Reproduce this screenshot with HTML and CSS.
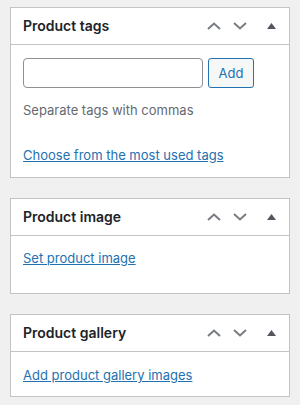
FILE: index.html
```html
<!DOCTYPE html>
<html lang="en">
<head>
    <meta charset="UTF-8">
    <meta name="viewport" content="width=device-width, initial-scale=1.0">
    <title>Product boxes</title>
    <link rel="stylesheet" href="styles.css">
</head>
<body>
    <div class="sidebar">
        <section class="postbox">
            <header class="postbox-header">
                <h2>Product tags</h2>
                <div class="handle-actions">
                    <button class="handle up" aria-label="Move up">
                        <svg width="14" height="8" viewBox="0 0 14 8"><path d="M1 7 L7 1.5 L13 7" fill="none" stroke="#787c82" stroke-width="2"/></svg>
                    </button>
                    <button class="handle down" aria-label="Move down">
                        <svg width="14" height="8" viewBox="0 0 14 8"><path d="M1 1 L7 6.5 L13 1" fill="none" stroke="#787c82" stroke-width="2"/></svg>
                    </button>
                    <button class="handle toggle" aria-label="Toggle panel">
                        <svg width="9" height="6" viewBox="0 0 9 6"><path d="M0 6 L4.5 0 L9 6 Z" fill="#50575e"/></svg>
                    </button>
                </div>
            </header>
            <div class="inside tags">
                <div class="tag-add">
                    <input type="text" class="tag-input">
                    <button class="button">Add</button>
                </div>
                <p class="howto">Separate tags with commas</p>
                <p class="tag-cloud-link"><a href="#">Choose from the most used tags</a></p>
            </div>
        </section>

        <section class="postbox">
            <header class="postbox-header">
                <h2>Product image</h2>
                <div class="handle-actions">
                    <button class="handle up" aria-label="Move up">
                        <svg width="14" height="8" viewBox="0 0 14 8"><path d="M1 7 L7 1.5 L13 7" fill="none" stroke="#787c82" stroke-width="2"/></svg>
                    </button>
                    <button class="handle down" aria-label="Move down">
                        <svg width="14" height="8" viewBox="0 0 14 8"><path d="M1 1 L7 6.5 L13 1" fill="none" stroke="#787c82" stroke-width="2"/></svg>
                    </button>
                    <button class="handle toggle" aria-label="Toggle panel">
                        <svg width="9" height="6" viewBox="0 0 9 6"><path d="M0 6 L4.5 0 L9 6 Z" fill="#50575e"/></svg>
                    </button>
                </div>
            </header>
            <div class="inside short">
                <p><a href="#">Set product image</a></p>
            </div>
        </section>

        <section class="postbox">
            <header class="postbox-header">
                <h2>Product gallery</h2>
                <div class="handle-actions">
                    <button class="handle up" aria-label="Move up">
                        <svg width="14" height="8" viewBox="0 0 14 8"><path d="M1 7 L7 1.5 L13 7" fill="none" stroke="#787c82" stroke-width="2"/></svg>
                    </button>
                    <button class="handle down" aria-label="Move down">
                        <svg width="14" height="8" viewBox="0 0 14 8"><path d="M1 1 L7 6.5 L13 1" fill="none" stroke="#787c82" stroke-width="2"/></svg>
                    </button>
                    <button class="handle toggle" aria-label="Toggle panel">
                        <svg width="9" height="6" viewBox="0 0 9 6"><path d="M0 6 L4.5 0 L9 6 Z" fill="#50575e"/></svg>
                    </button>
                </div>
            </header>
            <div class="inside gallery">
                <p><a href="#">Add product gallery images</a></p>
            </div>
        </section>
    </div>
</body>
</html>
```

FILE: styles.css
```css
/* General */
body {
    font-family: 'Inter', 'Liberation Sans', Arial, sans-serif;
    font-size: 13px;
    line-height: 18px;
    color: #3c434a;
    margin: 0;
    padding: 0;
    background-color: #f0f0f1;
}

.sidebar {
    padding: 7px 10px 0 10px;
    display: flex;
    flex-direction: column;
    gap: 20px;
}

/* Boxes */
.postbox {
    background-color: #fff;
    border: 1px solid #c3c4c7;
}

.postbox-header {
    display: flex;
    align-items: center;
    justify-content: space-between;
    height: 36px;
    border-bottom: 1px solid #c3c4c7;
}

.postbox-header h2 {
    margin: 0;
    padding: 0 12px;
    font-size: 14px;
    font-weight: 600;
    color: #1d2327;
}

.handle-actions {
    display: flex;
    align-items: center;
    height: 100%;
}

.handle {
    background: none;
    border: none;
    padding: 0;
    height: 36px;
    display: flex;
    align-items: center;
    justify-content: center;
    cursor: pointer;
}

.handle.up,
.handle.down {
    width: 26px;
}

.handle.toggle {
    width: 36px;
}

/* Inside */
.inside {
    padding: 13px 12px 12px 12px;
}

.inside p {
    margin: 0;
}

.inside.tags {
    padding-bottom: 13px;
}

.tag-add {
    display: flex;
    gap: 5px;
}

.tag-input {
    width: 180px;
    height: 30px;
    box-sizing: border-box;
    border: 1px solid #8c8f94;
    border-radius: 4px;
    padding: 0 8px;
    margin: 0;
}

.button {
    height: 30px;
    width: 46px;
    box-sizing: border-box;
    border: 1px solid #2271b1;
    border-radius: 3px;
    background-color: #f6f7f7;
    color: #2271b1;
    font-family: inherit;
    font-size: 13px;
    padding: 0;
    cursor: pointer;
}

.inside .howto {
    color: #646970;
    margin-top: 13px;
}

.inside .tag-cloud-link {
    margin-top: 27px;
}

a {
    color: #2271b1;
    text-decoration: underline;
}

.inside.short {
    padding: 13px 12px 26px 12px;
}

.inside.gallery {
    padding: 14px 12px 12px 12px;
}
```
